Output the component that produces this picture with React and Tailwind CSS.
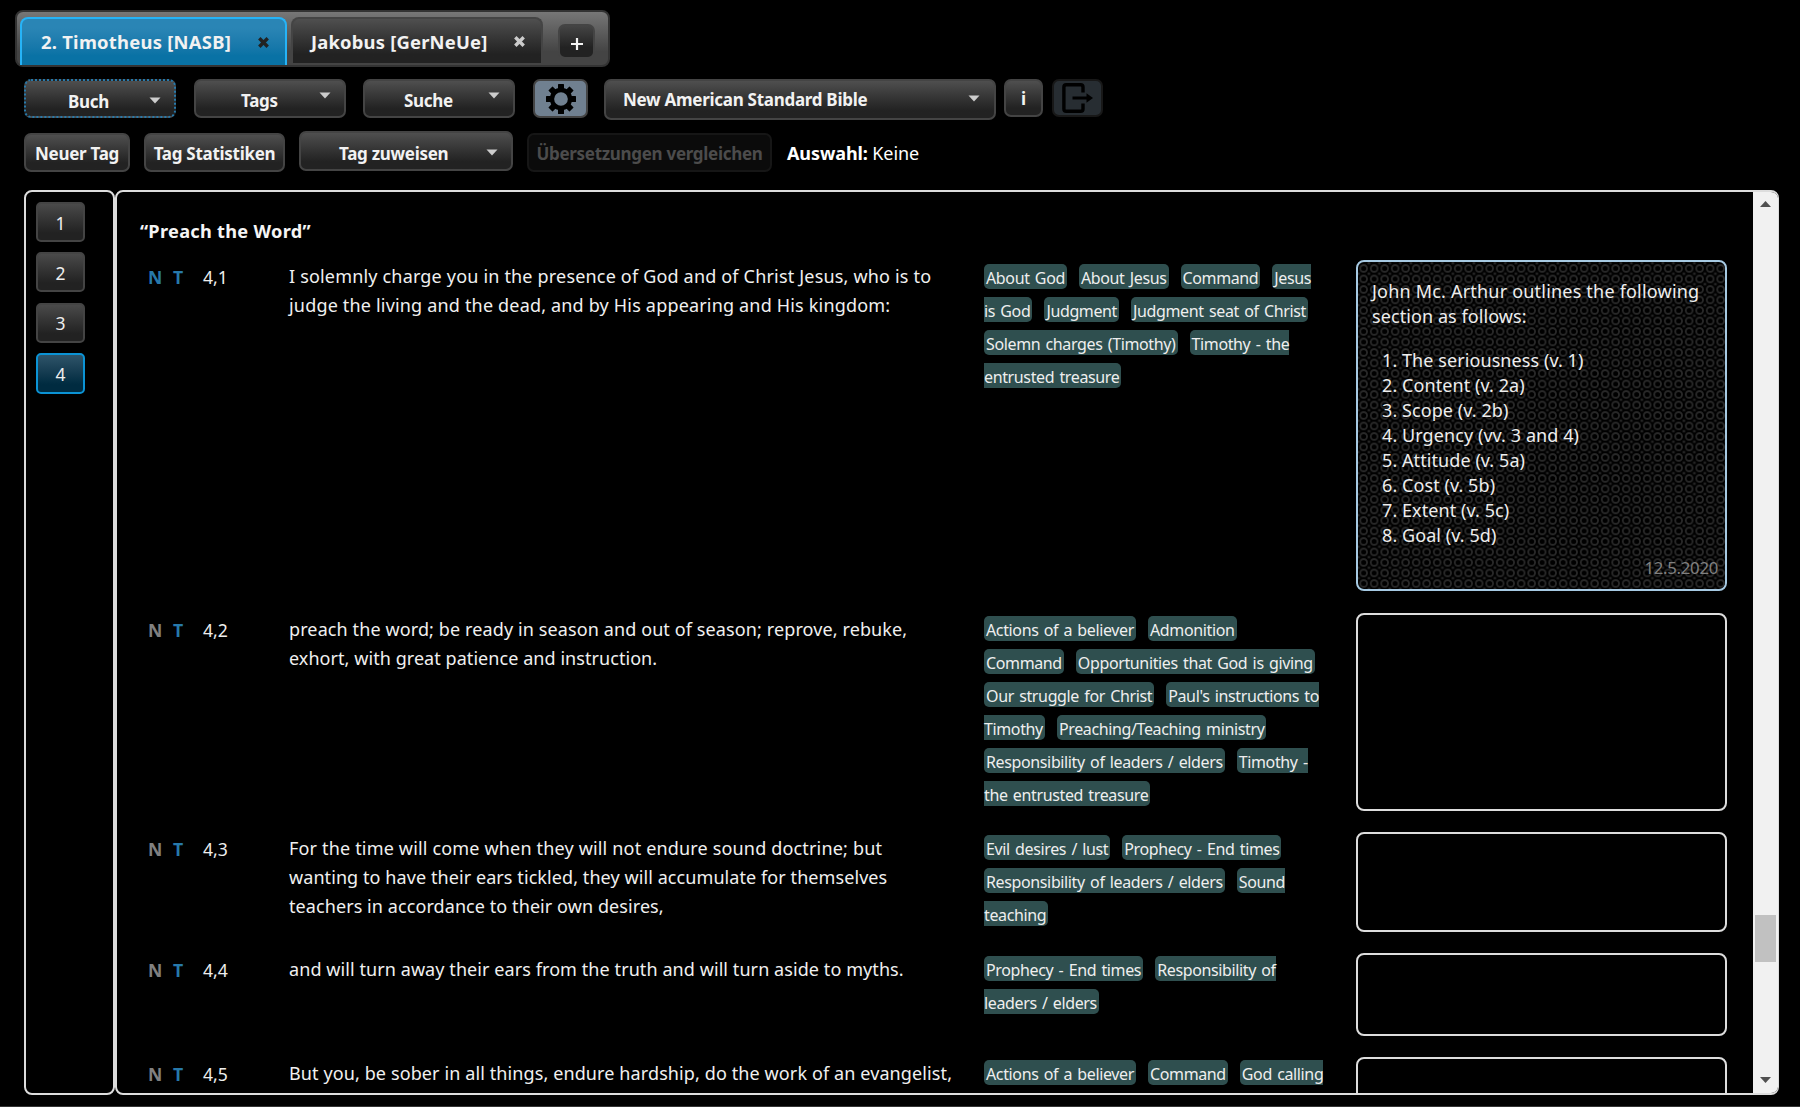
import React from "react";

const BUTTON =
  "flex items-center rounded-[7px] border-2 bg-linear-to-b from-[#4f4f4f] to-[#222] to-80% text-[17px] font-bold tracking-[-0.28px] text-[#f2f2f2] whitespace-nowrap";

const verses = [
  {
    ref: "4,1",
    height: "h-[353px]",
    noted: true,
    text: [
      ["I solemnly charge you in the presence of God and of Christ Jesus, who is to", "tracking-[0.18px]"],
      ["judge the living and the dead, and by His appearing and His kingdom:", "tracking-[0.18px]"],
    ],
    tags: [
      ["About God", "About Jesus", "Command", "Jesus>"],
      ["<is God", "Judgment", "Judgment seat of Christ"],
      ["Solemn charges (Timothy)", "Timothy - the>"],
      ["<entrusted treasure"],
    ],
  },
  {
    ref: "4,2",
    height: "h-[219px]",
    text: [
      ["preach the word; be ready in season and out of season; reprove, rebuke,", "tracking-[0.11px]"],
      ["exhort, with great patience and instruction.", "tracking-[0.06px]"],
    ],
    tags: [
      ["Actions of a believer", "Admonition"],
      ["Command", "Opportunities that God is giving"],
      ["Our struggle for Christ", "Paul's instructions to>"],
      ["<Timothy", "Preaching/Teaching ministry"],
      ["Responsibility of leaders / elders", "Timothy ->"],
      ["<the entrusted treasure"],
    ],
  },
  {
    ref: "4,3",
    height: "h-[121px]",
    text: [
      ["For the time will come when they will not endure sound doctrine; but", "tracking-[0.17px]"],
      ["wanting to have their ears tickled, they will accumulate for themselves", "tracking-[0.08px]"],
      ["teachers in accordance to their own desires,", "tracking-[0.08px]"],
    ],
    tags: [
      ["Evil desires / lust", "Prophecy - End times"],
      ["Responsibility of leaders / elders", "Sound>"],
      ["<teaching"],
    ],
  },
  {
    ref: "4,4",
    height: "h-[104px]",
    text: [["and will turn away their ears from the truth and will turn aside to myths.", "tracking-[0.08px]"]],
    tags: [["Prophecy - End times", "Responsibility of>"], ["<leaders / elders"]],
  },
  {
    ref: "4,5",
    height: "h-[104px]",
    text: [["But you, be sober in all things, endure hardship, do the work of an evangelist,", "tracking-[0.11px]"]],
    tags: [["Actions of a believer", "Command", "God calling>"]],
  },
];

const outline = [
  "The seriousness (v. 1)",
  "Content (v. 2a)",
  "Scope (v. 2b)",
  "Urgency (vv. 3 and 4)",
  "Attitude (v. 5a)",
  "Cost (v. 5b)",
  "Extent (v. 5c)",
  "Goal (v. 5d)",
];

function Caret({ className = "" }) {
  return (
    <svg className={`shrink-0 ${className}`} width="12" height="7" viewBox="0 0 12 7">
      <path d="M0.5 0.5H11.5L6 6.5Z" fill="#ccc" />
    </svg>
  );
}

function Cross({ color }) {
  return (
    <svg width="11" height="11" viewBox="0 0 11 11">
      <path d="M1.3 1.3L9.7 9.7M9.7 1.3L1.3 9.7" stroke={color} strokeWidth="3.4" />
    </svg>
  );
}

function Gear() {
  return (
    <svg width="30" height="30" viewBox="-15 -15 30 30">
      <circle r="9" fill="none" stroke="#000" strokeWidth="4.3" />
      {[0, 45, 90, 135, 180, 225, 270, 315].map((a) => (
        <rect key={a} x="-3" y="-15" width="6" height="6" rx="0.5" transform={`rotate(${a})`} />
      ))}
    </svg>
  );
}

function Exit() {
  return (
    <svg width="32" height="30" viewBox="0 0 32 30" fill="none" stroke="#000">
      <path d="M21 9.5V4Q21 1.7 18.7 1.7H4.2Q1.9 1.7 1.9 4V26Q1.9 28.3 4.2 28.3H18.7Q21 28.3 21 26V20.5" strokeWidth="3.4" />
      <path d="M10.5 15H26" strokeWidth="3" />
      <path d="M24.5 10.3L31 15L24.5 19.7Z" fill="#000" stroke="none" />
    </svg>
  );
}

function Tabs() {
  return (
    <div className="ml-[15px] flex h-[57px] w-[595px] items-start rounded-lg border-2 border-[#333] bg-linear-to-b from-[#777] to-[#444] to-75% pt-[5px] pl-[3px] text-[18.4px] font-bold text-[#f2f2f2]">
      <div className="flex h-12 w-[267px] items-center justify-between rounded-t-lg border-2 border-b-0 border-[#26b3f7] bg-linear-to-b from-[#2a85b5] from-20% to-[#0972a5] to-80% pr-4 pl-[19px]">
        <span className="tracking-[0.26px] whitespace-nowrap">2. Timotheus [NASB]</span>
        <Cross color="#222" />
      </div>
      <div className="ml-[4px] flex h-[46px] w-[252px] items-center justify-between rounded-t-lg border-2 border-b-0 border-[#444] bg-linear-to-b from-[#4f4f4f] to-[#222] to-80% pt-px pr-[16px] pl-[18px]">
        <span className="tracking-[0.2px] whitespace-nowrap">Jakobus [GerNeUe]</span>
        <Cross color="#ccc" />
      </div>
      <div className="mt-[7px] ml-[15px] flex h-[35px] w-[37px] items-center justify-center rounded-[7px] border-2 border-[#444] bg-linear-to-b from-[#444] to-[#222] to-70% pt-[5px]">
        <svg width="12" height="12" viewBox="0 0 12 12">
          <path d="M6 0V12M0 6H12" stroke="#f2f2f2" strokeWidth="2.2" />
        </svg>
      </div>
    </div>
  );
}

function Toolbar() {
  return (
    <>
      <div className="mt-3 ml-6 flex items-start">
        <div className={`${BUTTON} h-[39px] w-[152px] justify-between border-dotted border-[#2779aa] pt-[6px] pr-[13px] pl-[42px]`}>
          <span>Buch</span>
          <Caret className="mb-[3px]" />
        </div>
        <div className={`${BUTTON} ml-[18px] h-[39px] w-[152px] justify-between border-[#444] pt-[4px] pr-[13px] pl-[45px]`}>
          <span>Tags</span>
          <Caret className="mb-[11px]" />
        </div>
        <div className={`${BUTTON} ml-[17px] h-[39px] w-[152px] justify-between border-[#444] pt-[4px] pr-[13px] pl-[39px]`}>
          <span>Suche</span>
          <Caret className="mb-[11px]" />
        </div>
        <div className="ml-[18px] flex h-[39px] w-[55px] items-center justify-center rounded-[7px] border-2 border-[#444] bg-[#708090]">
          <Gear />
        </div>
        <div className={`${BUTTON} ml-4 h-[41px] w-[392px] justify-between border-[#444] pt-px pr-[14px] pl-[17px]`}>
          <span>New American Standard Bible</span>
          <Caret className="mb-1" />
        </div>
        <div className={`${BUTTON} ml-2 h-[38px] w-[39px] justify-center border-[#444] pt-px`}>i</div>
        <div className="ml-[9px] flex h-[38px] w-[51px] items-center justify-center rounded-[7px] border-2 border-[#181818] bg-[#272d32]">
          <Exit />
        </div>
      </div>
      <div className="mt-[11px] ml-6 flex h-[41px] items-start">
        <div className={`${BUTTON} mt-0.5 h-[39px] w-[106px] justify-center border-[#444] pt-[3px]`}>Neuer Tag</div>
        <div className={`${BUTTON} mt-0.5 ml-[14px] h-[39px] w-[141px] justify-center border-[#444] pt-[3px]`}>Tag Statistiken</div>
        <div className={`${BUTTON} ml-[14px] h-[40px] w-[214px] justify-between border-[#444] pt-[6px] pr-[13px] pl-[38px]`}>
          <span>Tag zuweisen</span>
          <Caret className="mb-1" />
        </div>
        <div className="mt-0.5 ml-[14px] flex h-[39px] w-[245px] items-center justify-center rounded-[7px] border-2 border-[#161616] bg-[#0b0b0b] pt-[3px] text-[17px] font-bold tracking-[-0.3px] whitespace-nowrap text-[#4c4c4c]">
          Übersetzungen vergleichen
        </div>
        <div className="mt-[9px] ml-[15px] text-[18px] tracking-[-0.1px] whitespace-nowrap text-white">
          <b>Auswahl:</b> Keine
        </div>
      </div>
    </>
  );
}

function Chapters() {
  return (
    <div className="flex w-[91px] flex-col gap-[10.3px] rounded-lg border-2 border-[#ddd] pt-[10px] pl-[10px]">
      {[1, 2, 3].map((n) => (
        <div key={n} className="flex h-10 w-[49px] items-center justify-center rounded-[5px] border-2 border-[#444] bg-linear-to-b from-[#4a4a4a] to-[#222] to-80% pt-[2px] text-[17.5px] text-[#eee]">
          {n}
        </div>
      ))}
      <div className="flex h-[41px] w-[49px] items-center justify-center rounded-[5px] border-2 border-[#0b93d5] bg-linear-to-b from-[#2f5469] to-[#002b40] to-80% pt-0.5 text-[17.5px] text-[#eee]">
        4
      </div>
    </div>
  );
}

// "<" marks a label continued from the previous row, ">" one that goes on in the next.
function Tag({ label }) {
  const opens = !label.startsWith("<");
  const closes = !label.endsWith(">");
  return (
    <span
      className={`flex h-[25px] items-center bg-[#2f4f4f] pt-[3px] ${opens ? "rounded-l-[5px] pl-0.5" : ""} ${closes ? "rounded-r-[5px] pr-0.5" : ""}`}
    >
      {label.replace(/^<|>$/g, "")}
    </span>
  );
}

function Note() {
  return (
    <div className="relative h-[331px] w-[371px] overflow-hidden rounded-lg border-2 border-[#a6c9e2] bg-black text-[18px] leading-[25px] tracking-[0.08px] text-[#eee]">
      <svg className="absolute inset-0" width="367" height="327">
        <defs>
          <pattern id="weave" x="0.4" y="1.2" width="10.5" height="10.5" patternUnits="userSpaceOnUse">
            <circle cx="5.25" cy="5.25" r="3.4" fill="none" stroke="#292929" strokeWidth="1.8" />
            <path d="M0 0H1.3V1.3H0ZM9.2 0H10.5V1.3H9.2ZM0 9.2H1.3V10.5H0ZM9.2 9.2H10.5V10.5H9.2Z" fill="#242424" />
          </pattern>
        </defs>
        <rect width="367" height="327" fill="url(#weave)" />
      </svg>
      <div className="relative flex h-full flex-col pt-[17px] pl-[14px] whitespace-nowrap">
        <p className="tracking-[0.2px]">John Mc. Arthur outlines the following</p>
        <p>section as follows:</p>
        <ol className="mt-[19px] pl-[10px]">
          {outline.map((item, i) => (
            <li key={item} className="flex">
              <span className="w-5">{i + 1}.</span>
              {item}
            </li>
          ))}
        </ol>
        <p className="mt-[7px] pr-[7px] text-right text-[16.8px] tracking-[-0.3px] text-[#808080]">12.5.2020</p>
      </div>
    </div>
  );
}

function Verse({ verse }) {
  return (
    <div className={`flex shrink-0 items-stretch ${verse.height}`}>
      <div className="flex w-[149px] pt-[5px] pl-[8px] text-[17.6px] leading-[24px] text-[#eee]">
        <b className={`w-[25px] ${verse.noted ? "text-[#2779aa]" : "text-[#808080]"}`}>N</b>
        <b className="w-[30px] text-[#2779aa]">T</b>
        <span>{verse.ref}</span>
      </div>
      <div className="w-[695px] pt-[2px] text-[18px] leading-[29px] whitespace-nowrap text-[#f0f0f0]">
        {verse.text.map(([line, tracking]) => (
          <div key={line} className={tracking}>
            {line}
          </div>
        ))}
      </div>
      <div
        className={`flex w-[372px] flex-col gap-2 text-[16px] tracking-[-0.37px] [word-spacing:1.5px] whitespace-nowrap text-[#eee] ${verse.noted ? "pt-[4px]" : "pt-[3px]"}`}
      >
        {verse.tags.map((row, i) => (
          <div key={i} className="flex gap-3">
            {row.map((tag) => (
              <Tag key={tag} label={tag} />
            ))}
          </div>
        ))}
      </div>
      {verse.noted ? (
        <Note />
      ) : (
        <div className="mb-[21px] w-[371px] rounded-lg border-2 border-[#ddd]" />
      )}
    </div>
  );
}

function Scrollbar() {
  return (
    <div className="flex w-[25px] flex-col items-center bg-[#f1f1f1] pt-[9px] pb-[10px]">
      <svg width="11" height="6" viewBox="0 0 11 6">
        <path d="M0 6L5.5 0L11 6Z" fill="#505050" />
      </svg>
      <div className="mt-[708px] h-[47px] w-[21px] bg-[#c1c1c1]" />
      <svg className="mt-auto" width="11" height="6" viewBox="0 0 11 6">
        <path d="M0 0L5.5 6L11 0Z" fill="#505050" />
      </svg>
    </div>
  );
}

export default function App() {
  return (
    <div className="flex h-[1107px] w-[1800px] flex-col overflow-hidden border-b border-[#333] bg-black pt-[10px] font-['Noto_Sans','Open_Sans',sans-serif]">
      <Tabs />
      <Toolbar />
      <div className="mt-[18px] ml-6 flex h-[905px] w-[1755px]">
        <Chapters />
        <div className="flex flex-1 justify-between overflow-hidden rounded-lg border-2 border-r border-[#ddd]">
          <div className="flex flex-col overflow-hidden pl-[23px]">
            <h2 className="mt-[27px] mb-[17px] h-6 text-[18.2px] leading-6 font-bold tracking-[0.28px] text-[#f5f5f5]">“Preach the Word”</h2>
            {verses.map((verse) => (
              <Verse key={verse.ref} verse={verse} />
            ))}
          </div>
          <Scrollbar />
        </div>
      </div>
    </div>
  );
}
